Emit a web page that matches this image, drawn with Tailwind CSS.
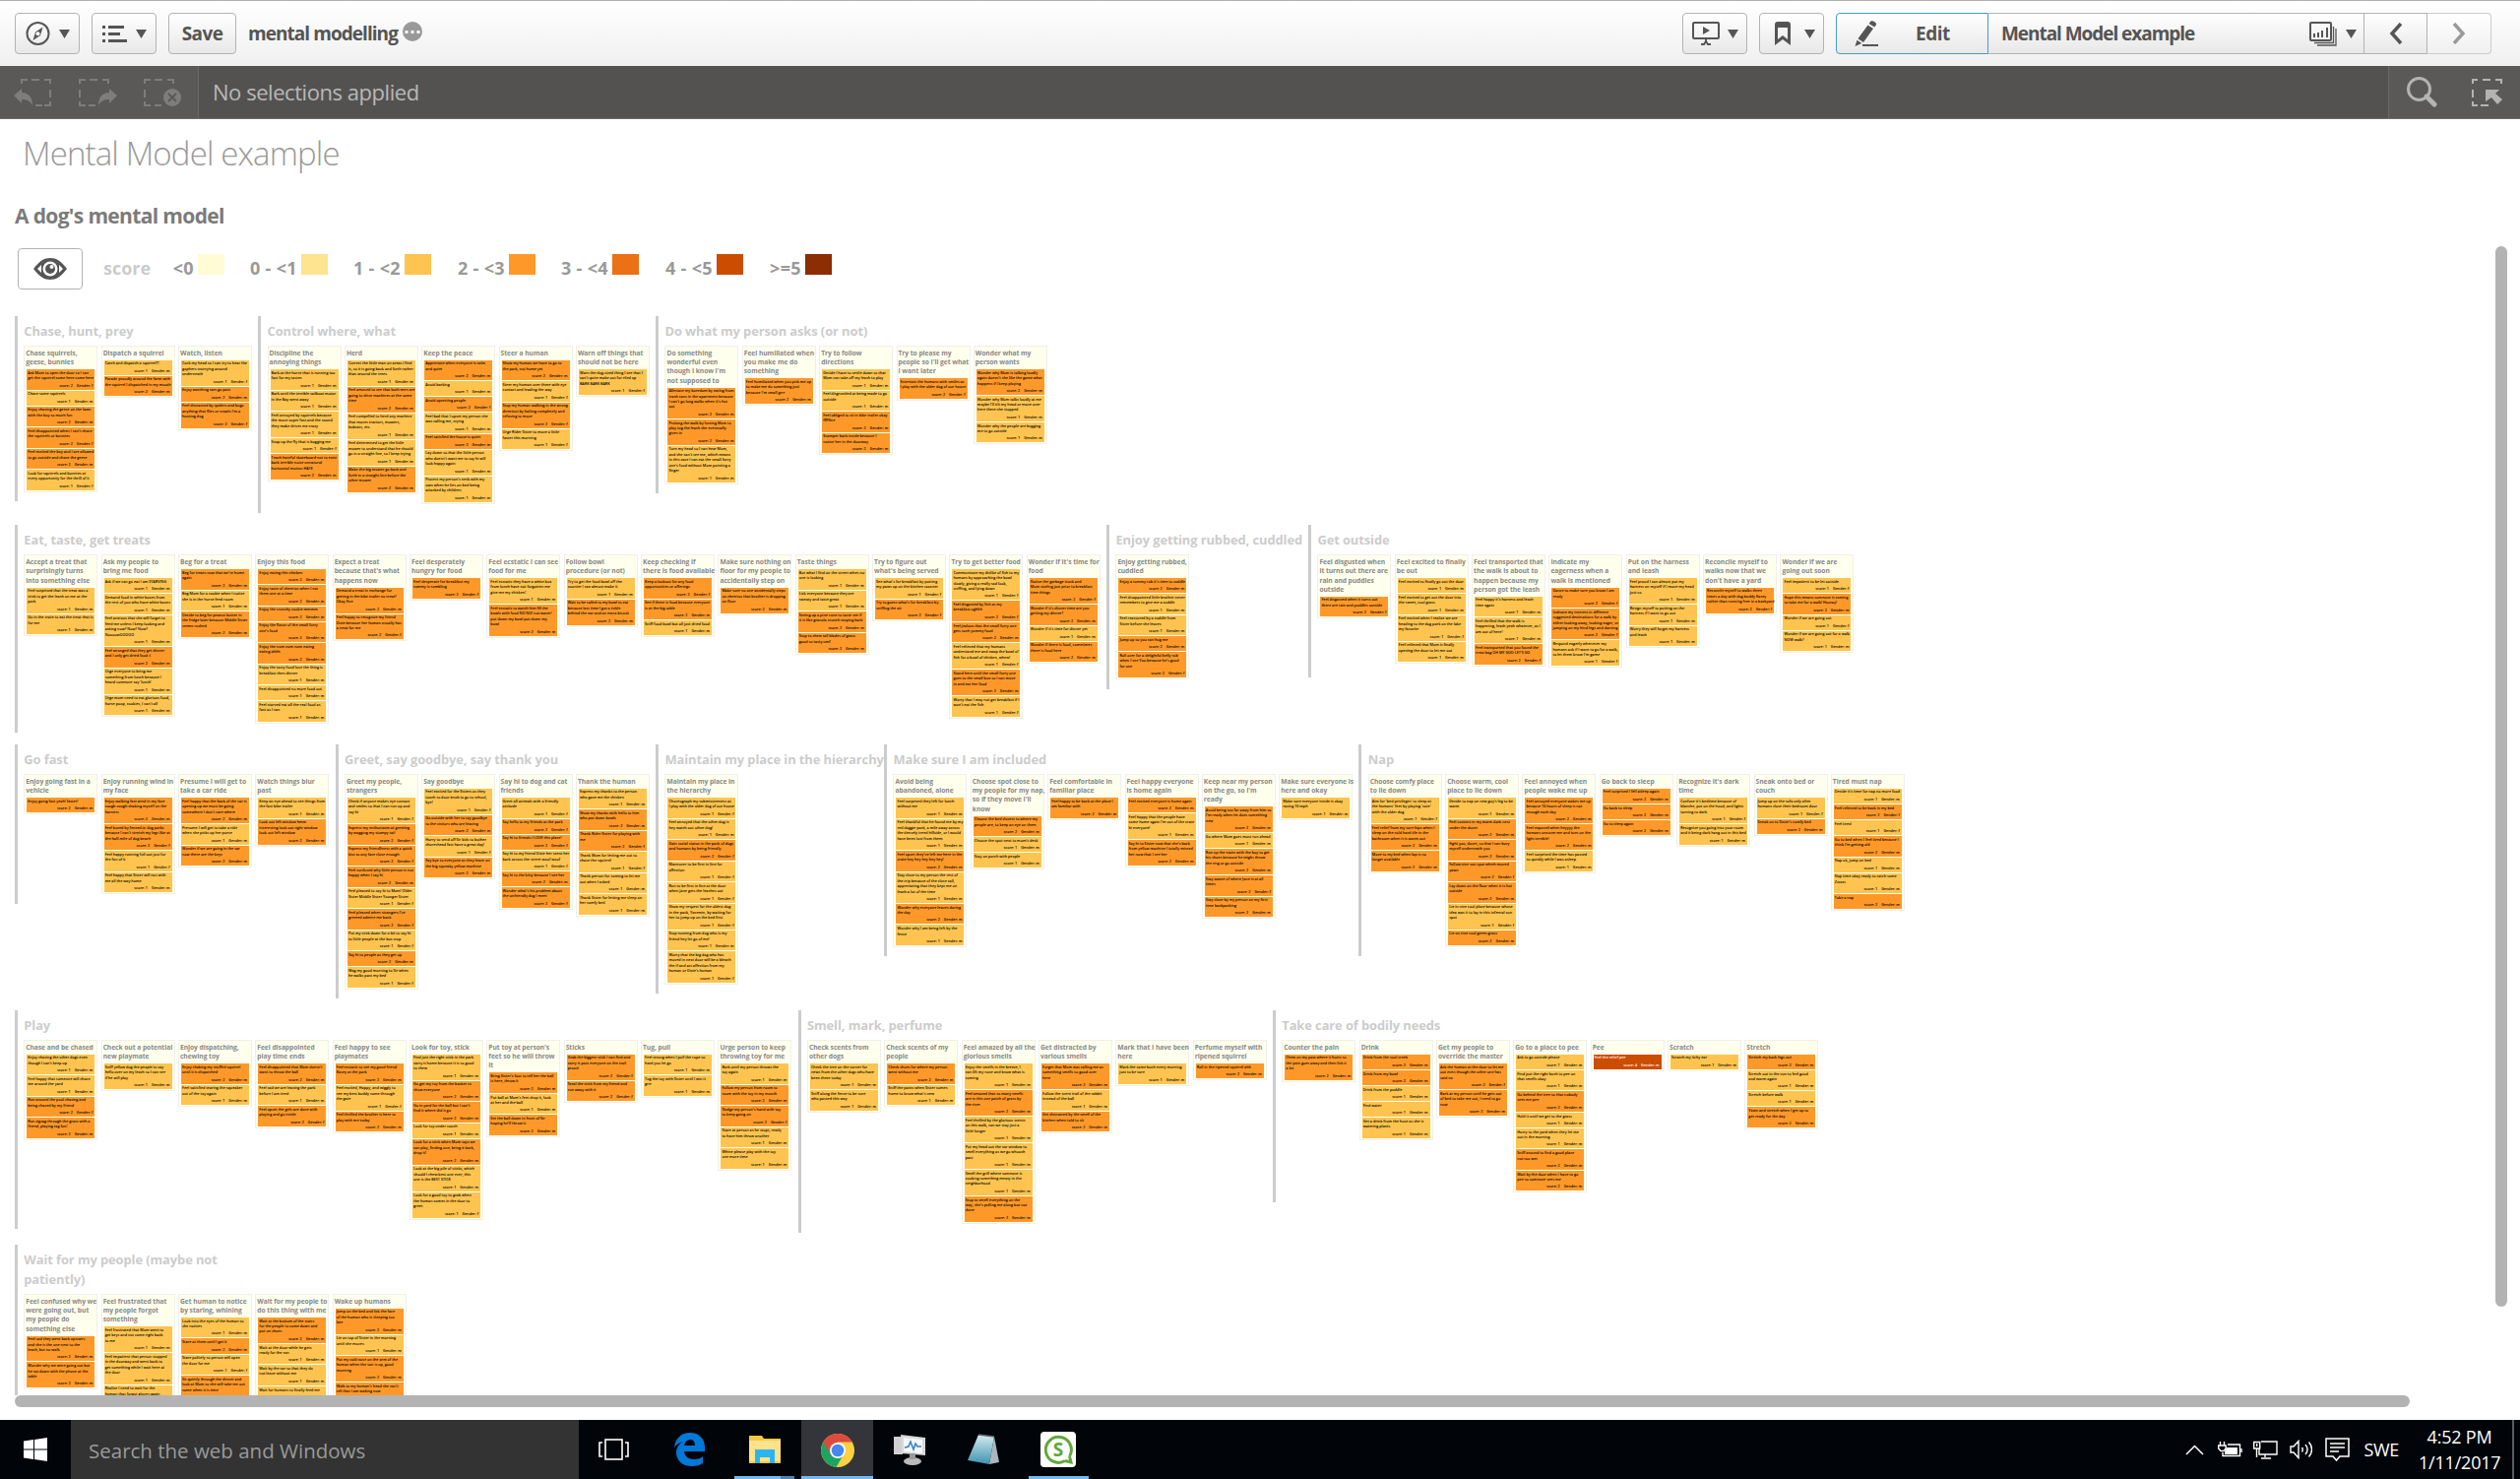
<!DOCTYPE html>
<html lang="en">
<head>
<meta charset="utf-8">
<title>Mental Model example</title>
<script src="https://cdn.jsdelivr.net/npm/@tailwindcss/browser@4"></script>
</head>
<body class="w-[2560px] h-[1502px] overflow-hidden bg-white font-['Open_Sans',sans-serif] flex flex-col">

<!-- Toolbar -->
<header class="h-[67px] shrink-0 border-t border-[#b0b0b0] bg-linear-to-b from-white to-[#f0f0f0] flex items-center pl-[15px] pr-[29px] text-[#555] font-bold text-[19px]">
  <button class="w-[66px] h-[42px] rounded-[4px] border border-[#b3b3b3] bg-linear-to-b from-white to-[#e8e8e8] flex items-center justify-center gap-[9px]">
    <svg width="25" height="24" viewBox="0 0 25 24" fill="none" stroke="#555" stroke-width="2"><circle cx="12.5" cy="12" r="11"/><path d="M17.5 5.5 15 14l-7.500 5L10 10.500z" fill="#555" stroke="none"/><circle cx="12.500" cy="12.300" r="2" fill="#fff" stroke="none"/></svg>
    <svg width="11" height="9" viewBox="0 0 11 9"><path d="M0 0h11L5.500 9z" fill="#555"/></svg>
  </button>
  <button class="ml-3 w-[66px] h-[42px] rounded-[4px] border border-[#b3b3b3] bg-linear-to-b from-white to-[#e8e8e8] flex items-center justify-center gap-[9px]">
    <svg width="25" height="17" viewBox="0 0 25 17" fill="#555"><path d="M0 0h3v3H0zM6 0h16v3H6zM0 7h3v3H0zM6 7h12v3H6zM0 14h3v3H0zM6 14h19v3H6z"/></svg>
    <svg width="11" height="9" viewBox="0 0 11 9"><path d="M0 0h11L5.500 9z" fill="#555"/></svg>
  </button>
  <button class="ml-3 w-[69px] h-[42px] rounded-[4px] border border-[#b3b3b3] bg-linear-to-b from-white to-[#e8e8e8] tracking-[-0.6px]">Save</button>
  <span class="ml-3 tracking-[-0.95px]">mental modelling</span>
  <svg class="ml-[5px] mb-1" width="20" height="20" viewBox="0 0 20 20"><circle cx="10" cy="10" r="10" fill="#999"/><path d="M2.500 9h3v3h-3zM8.500 9h3v3h-3zM14.500 9h3v3h-3z" fill="#fff"/></svg>

  <button class="ml-auto w-[66px] h-[42px] rounded-[4px] border border-[#b3b3b3] bg-linear-to-b from-white to-[#e8e8e8] flex items-center justify-center gap-[8px]">
    <svg width="28" height="24" viewBox="0 0 28 24" fill="none" stroke="#555" stroke-width="2"><rect x="1" y="1" width="26" height="16" rx="1"/><path d="M14 17v5M9 23h3l2-3 2 3h3"/><path d="M11 5v8l7-4z" fill="#555" stroke="none"/></svg>
    <svg width="11" height="9" viewBox="0 0 11 9"><path d="M0 0h11L5.500 9z" fill="#555"/></svg>
  </button>
  <button class="ml-3 w-[66px] h-[42px] rounded-[4px] border border-[#b3b3b3] bg-linear-to-b from-white to-[#e8e8e8] flex items-center justify-end pr-[8px] gap-[14px]">
    <svg width="16" height="24" viewBox="0 0 16 24"><path d="M3 0h10a3 3 0 0 1 3 3v21l-8-6-8 6V3a3 3 0 0 1 3-3zm0 6v12l5-4 5 4V6z" fill="#555" fill-rule="evenodd"/></svg>
    <svg width="11" height="9" viewBox="0 0 11 9"><path d="M0 0h11L5.500 9z" fill="#555"/></svg>
  </button>
  <button class="ml-3 w-[155px] h-[42px] rounded-l-[4px] border border-[#4a9bc9] bg-linear-to-b from-white to-[#e8e8e8] flex items-center pl-[17px] tracking-[-0.5px]">
    <svg width="26" height="26" viewBox="0 0 26 26" fill="#555"><path d="M14.500 4.500l5.500 3.500-10 14-5.500-3.800zM15.600 3l2-2.500c1.500-1 6 1.500 5.500 3.500L21.200 6.500zM3.500 19.700l4.800 3.200L1.500 26zM9 24h16v2H9z"/></svg>
    <span class="ml-[37px]">Edit</span>
  </button>
  <div class="w-[381px] h-[42px] border-y border-[#b3b3b3] bg-linear-to-b from-white to-[#e8e8e8] flex items-center pl-[13px] pr-[7px] tracking-[-1.05px]">
    <span>Mental Model example</span>
    <svg class="ml-auto" width="28" height="25" viewBox="0 0 28 25" fill="none" stroke="#555" stroke-width="2"><rect x="1" y="1" width="21" height="18" rx="1"/><path d="M24.500 5v16.500H5M27 7v17H8" stroke-width="1.300"/><path d="M5 16v-4M9 16v-5M13 16V9M18 16V6"/></svg>
    <svg class="ml-[9px]" width="11" height="9" viewBox="0 0 11 9"><path d="M0 0h11L5.500 9z" fill="#555"/></svg>
  </div>
  <button class="w-[65px] h-[42px] border border-[#b3b3b3] bg-linear-to-b from-white to-[#e8e8e8] flex items-center justify-center">
    <svg width="15" height="22" viewBox="0 0 15 22" fill="none" stroke="#555" stroke-width="3.500"><path d="M13 1 4 11l9 10"/></svg>
  </button>
  <button class="w-[65px] h-[42px] rounded-r-[4px] border border-l-0 border-[#ccc] bg-linear-to-b from-white to-[#f0f0f0] flex items-center justify-center">
    <svg width="15" height="22" viewBox="0 0 15 22" fill="none" stroke="#999" stroke-width="3.500"><path d="M2 1l9 10-9 10"/></svg>
  </button>
</header>

<!-- Selections bar -->
<div class="h-[54px] shrink-0 bg-[#545250] border-b border-[#737170] flex text-[22px] text-[#b8b8b8]">
  <div class="w-[202px] bg-[#5a5957] border-r border-[#6b6a68] flex items-center pl-[14px] gap-[27px]">
    <svg width="39" height="30" viewBox="0 0 39 30" fill="none" stroke="#7e7d7b" stroke-width="2"><path d="M8 6V2h6M18 2h8M31 2h6v4M37 12v8M37 24v4h-6M22 28h7"/><path d="M0 18l8-7v4c7 0 11 5 11 13-3-5-6-6-11-6v4z" fill="#7e7d7b" stroke="none"/></svg>
    <svg width="39" height="30" viewBox="0 0 39 30" fill="none" stroke="#7e7d7b" stroke-width="2"><path d="M1 6V2h6M11 2h8M24 2h6v4M1 12v8M1 24v4h6M10 28h7"/><path d="M39 18l-8-7v4c-7 0-11 5-11 13 3-5 6-6 11-6v4z" fill="#7e7d7b" stroke="none"/></svg>
    <svg width="39" height="30" viewBox="0 0 39 30" fill="none" stroke="#7e7d7b" stroke-width="2"><path d="M1 6V2h6M11 2h8M24 2h6v4M1 12v8M1 24v4h6M11 28h7"/><circle cx="29" cy="20" r="9" fill="#7e7d7b" stroke="none"/><path d="M25 16l8 8M33 16l-8 8" stroke="#5a5957"/></svg>
  </div>
  <span class="ml-[14px] self-center tracking-[-0.45px]">No selections applied</span>
  <div class="ml-auto w-[134px] bg-[#5a5957] border-l border-[#6b6a68] flex items-center pl-[18px] gap-[35px]">
    <svg width="31" height="31" viewBox="0 0 31 31" fill="none" stroke="#b3b3b3"><circle cx="12.500" cy="12.500" r="11" stroke-width="3"/><path d="M20 20l8 8" stroke-width="5" stroke-linecap="round"/></svg>
    <svg width="31" height="30" viewBox="0 0 31 30" fill="none" stroke="#b3b3b3" stroke-width="2"><path d="M1 6V2h5M11 2h8M24 2h6v4M1 12v8M1 24v4h5M9 28h8"/><path d="M14 12h14l-4 4 7 6-5 5-6-7-6 4z" fill="#b3b3b3" stroke="none"/></svg>
  </div>
</div>

<main class="relative h-[1321px] shrink-0 flex flex-col">
  <h1 class="h-[70px] pl-[23px] leading-[70px] text-[33px] font-light text-[#999] tracking-[-0.85px]">Mental Model example</h1>
  <h2 class="h-[56px] pl-[15px] leading-[56px] text-[21px] font-bold text-[#7b7b7b] tracking-[-0.65px]">A dog's mental model</h2>
  <div class="h-[74px] pl-[18px] pt-[5px] flex items-start">
    <div class="w-[66px] h-[42px] rounded-[4px] border border-[#b3b3b3] flex items-center justify-center">
      <svg width="34" height="22" viewBox="0 0 34 22"><path d="M0 11C6 3 11 0 17 0s11 3 17 11c-6 8-11 11-17 11S6 19 0 11z" fill="#555"/><circle cx="17" cy="11" r="7.500" fill="#fff"/><circle cx="17" cy="11" r="5" fill="#555"/><circle cx="18.500" cy="9" r="2" fill="#fff"/><path d="M4 11l4-4v8zM30 11l-4-4v8z" fill="#fff"/></svg>
    </div>
    <span class="ml-[21px] w-[69px] leading-[40px] text-[18px] font-bold text-[#ccc]">score</span>
    <div id="legend" class="flex pt-[6px] text-[18px] tracking-[0.350px] font-bold text-[#999]"></div>
  </div>
  <div id="board" class="ml-[15px] h-[1096px] w-[2500px] overflow-hidden flex flex-col gap-[12px]"></div>
  <div class="absolute left-[2535px] top-[129px] w-3 h-[1077px] rounded-full bg-[#b3b3b3]"></div>
  <div class="absolute left-[15px] top-[1296px] w-[2433px] h-3 rounded-full bg-[#b3b3b3]"></div>
</main>

<!-- Taskbar -->
<footer class="h-[60px] shrink-0 bg-[#010409] flex text-white">
  <div class="w-[72px] flex items-center justify-center"><svg width="24" height="24" viewBox="0 0 24 24" fill="#fff"><path d="M0 3.500l10-1.400v9.400H0zM11 2l13-2v11.500H11zM0 12.500h10v9.400L0 20.500zM11 12.500h13V24l-13-2z"/></svg></div>
  <div class="w-[516px] bg-[#333] pl-[18px] leading-[62px] text-[20.500px] text-[#9a9a9a]">Search the web and Windows</div>
  <div class="w-[72px] flex items-center justify-center"><svg width="32" height="22" viewBox="0 0 32 22" fill="none" stroke="#fff" stroke-width="1.600"><rect x="7" y="1" width="17" height="20"/><path d="M4 4H1v14h3M27 4h3v14h-3"/></svg></div>
  <div class="w-[79px] flex items-center justify-center"><svg width="32" height="34" viewBox="0 0 32 34"><path d="M1 15C2 6 8 0 17 0c9 0 15 6 15 15v4H11c1 6 5 8 10 8 4 0 7-1 9-3v7c-3 2-7 3-11 3C9 34 3 28 3 20c0-5 3-9 7-11-4 1-7 3-9 6zm10-2h11c0-4-2-6-5-6s-5 2-6 6z" fill="#0078d7"/></svg></div>
  <div class="w-[75px] flex flex-col items-center justify-end">
    <svg class="mb-[13px]" width="32" height="28" viewBox="0 0 32 28"><path d="M0 0h13l2 3h17v25H0z" fill="#f5c945"/><path d="M0 5h32v21H0z" fill="#ffe28a"/><path d="M6 14h20v14h-5v-6H11v6H6z" fill="#2cb4f0"/></svg>
    <div class="w-[61px] h-[3px] flex"><div class="w-[47px] bg-[#76b9ed]"></div><div class="w-[14px] bg-[#4f86b0]"></div></div>
  </div>
  <div class="w-[73px] bg-[#34353b] flex flex-col items-center justify-end">
    <svg class="mb-[9px]" width="34" height="34" viewBox="0 0 34 34"><circle cx="17" cy="17" r="17" fill="#fbd043"/><path d="M17 17 2.300 8.500A17 17 0 0 0 15.500 33.900L23 21z" fill="#1da462"/><path d="M2.300 8.500A17 17 0 0 1 31.700 8.500H17L10 21z" fill="#dd4b3e"/><circle cx="17" cy="17" r="8" fill="#fff"/><circle cx="17" cy="17" r="6.300" fill="#4688f1"/></svg>
    <div class="w-full h-[3px] bg-[#76b9ed]"></div>
  </div>
  <div class="w-[75px] flex items-center justify-center"><svg width="35" height="32" viewBox="0 0 35 32"><path d="M1 3h9v18H1z" fill="#d0d0d0"/><path d="M8 1l25 3v18L9 20z" fill="#d9d9d9"/><path d="M11 4l19 2v14l-19-2z" fill="#f2f8fd"/><path d="M12 14l4-1 2-5 3 8 2-6 2 3h4" fill="none" stroke="#3d80b8" stroke-width="1.500"/><ellipse cx="20" cy="28" rx="9" ry="4" fill="#bbb"/><path d="M17 20h6v6h-6z" fill="#999"/></svg></div>
  <div class="w-[74px] flex items-center justify-center"><svg width="34" height="32" viewBox="0 0 34 32"><defs><linearGradient id="pad" x1="0" y1="0" x2="0" y2="1"><stop offset="0" stop-color="#d4edf2"/><stop offset="1" stop-color="#3f92ad"/></linearGradient></defs><path d="M12 1l16 2-5 28L1 27z" fill="url(#pad)"/><path d="M28 3l5 26-10 2z" fill="#a9b6bd"/><path d="M12 1l16 2" stroke="#666" stroke-width="1.500"/></svg></div>
  <div class="w-[78px] flex flex-col items-center justify-end">
    <svg class="mb-[9px]" width="36" height="36" viewBox="0 0 36 36"><rect width="36" height="36" rx="4" fill="#fff"/><path d="M29.500 25a13 13 0 1 0-4.500 4.500M29.500 25l1.500 6-6-1.500" fill="none" stroke="#61a83a" stroke-width="3"/><text x="18" y="25" text-anchor="middle" font-size="19" font-weight="700" fill="#61a83a">S</text></svg>
    <div class="w-[61px] h-[3px] bg-[#76b9ed]"></div>
  </div>
  <div class="ml-auto flex items-center">
    <svg width="19" height="11" viewBox="0 0 19 11" fill="none" stroke="#fff" stroke-width="1.500"><path d="M1 10l8.500-8.500L18 10"/></svg>
    <svg class="ml-[14px]" width="25" height="18" viewBox="0 0 25 18" fill="none" stroke="#fff" stroke-width="1.400"><path d="M10 4h12.500v11.500H5V12M2.500 1v4M6.500 1v4M.7 5h7.500v3L6 10.500H3L.7 8z"/><path d="M9 7h11v7H7v-3z" fill="#fff" stroke="none"/><path d="M24 8v4"/></svg>
    <svg class="ml-[11px]" width="25" height="20" viewBox="0 0 25 20" fill="none" stroke="#fff" stroke-width="1.400"><path d="M8 2h16v13H6V9M.7 2.500h6V9h-6zM3.700 4v3M12 15v3M8 19h10M3.500 9v9"/></svg>
    <svg class="ml-[12px]" width="23" height="20" viewBox="0 0 23 20" fill="none" stroke="#fff" stroke-width="1.400"><path d="M1 7h3l5-5.500v17L4 13H1zM12.500 8c1 1.500 1 3 0 4.500M16 5c2.500 3 2.500 7 0 10M19.500 2.500c4 4.500 4 10.500 0 15"/></svg>
    <svg class="ml-[13px]" width="25" height="25" viewBox="0 0 25 25" fill="none" stroke="#fff" stroke-width="1.500"><path d="M1 1h23v18H15l-3.500 4L8 19H1zM5 6h15M5 10h15M5 14h9"/></svg>
    <span class="ml-[14px] text-[18px] tracking-[-0.300px]">SWE</span>
    <div class="ml-[20px] w-[83px] text-center text-[18px] leading-[26px] tracking-[-0.200px]">4:52 PM<br>1/11/2017</div>
    <div class="ml-[12px] mr-[6px] w-[2px] h-[60px] bg-[#5c5c5e]"></div>
  </div>
</footer>

<script>
// Row per "= ", tower group per "# title|minWidth", tower per "* heading", note per "<score><gender> text"; "/" breaks a line.
const DATA = `
=
# Chase, hunt, prey
* Chase squirrels,/geese, bunnies
2f Ask Mom to open the door so I can/get the squirrel come here come here
1m Chase some squirrels
2m Enjoy chasing the geese on the lawn/with the boy so much fun
2f Feel disappointed when I can't chase/the squirrels or bunnies
2m Feel excited the boy and I are allowed/to go outside and chase the geese
1f Look for squirrels and bunnies at/every opportunity for the thrill of it
* Dispatch a squirrel
1m Catch and dispatch a squirrel!!!
2m Parade proudly around the farm with/the squirrel I dispatched in my mouth
* Watch, listen
1f Cock my head so I can try to hear the/gophers scurrying around/underneath
2m Enjoy watching cars go past
2f Feel distracted by spiders and bugs/anything that flies or crawls I'm a/hunting dog
# Control where, what
* Discipline the/annoying things
1m Bark at the horse that is running too/fast for my tastes
1m Bark until the terrible sailboat motor/in the Bay went away
1m Feel annoyed by squirrels because/the move super fast and the sound/they make drives me crazy
1f Snap up the fly that is bugging me
2m Teach hateful skateboard not to exist/bark terrible noise unnatural/horizontal motion HATE
* Herd
1m Correct the little man on areas I find/is, so it is going back and forth rather/than around the trees
2m Feel amused to see that both men are/going to drive machines at the same/time
1m Feel compelled to herd any machine/that moves tractors, mowers,/bobcats, etc.
1m Feel determined to get the little/mower to understand that he should/go in a straight line, so I keep trying
2m Make the big mower go back and/forth in a straight line before the/other mower
* Keep the peace
2m Appreciate when everyone is calm/and quiet
1m Avoid barking
2f Avoid upsetting people
1m Feel bad that I upset my person she/was calling me, crying
2m Feel satisfied the house is quiet
1m Lay down so that the little person/who doesn't want me to say hi will/look happy again
1m Protect my person's neck with my/own when he lies on bed being/attacked by children
* Steer a human
2m Show my human we have to go to/the park, not home yet
1f Steer my human over there with eye/contact and leading the way
2f Stop my human walking in the wrong/direction by halting completely and/refusing to move
1f Urge Rider Sister to move a little/faster this morning
* Warn off things that/should not be here
1f Warn the dog-sized thing I see that I/can't quite make out for riled up/BARK BARK BARK
# Do what my person asks (or not)
* Do something/wonderful even/though I know I'm/not supposed to
2m Alleviate my boredom by eating from/trash cans in the apartment because/I can't go long walks when it's hot/out
2m Prolong the walk by forcing Mom to/play tug the leash she eventually/gives in
1m Turn my head so I can hear Mom,/and she can't see me, which means/in this case I can eat the small furry/one's food without Mom pointing a/finger
* Feel humiliated when/you make me do/something
2m Feel humiliated when you pick me up/to make me do something just/because I'm small grrr
* Try to follow/directions
1m Decide I have to settle down so that/Mom can take off my leash to play
1m Feel disgruntled at being made to go/outside
2m Feel obliged to sit in bike trailer okay/fffffine
2m Scamper back inside because I/notice her in the doorway
* Try to please my/people so I'll get what/I want later
2f Entertain the humans with smiles as/I play with the older dog of our house
* Wonder what my/person wants
2m Wonder why Mom is talking loudly/again doesn't she like the game what/happens if I keep playing
1m Wonder why Mom talks loudly at me/maybe I'll tilt my head or move over/here there she stopped
1m Wonder why the people are bugging/me to go outside
=
# Eat, taste, get treats
* Accept a treat that/surprisingly turns/into something else
1m Feel surprised that the treat was a/trick to get the leash on me at the/park
1m Go in the crate to eat the treat that is/for me
* Ask my people to/bring me food
1m Ask if we can go eat I am STARVING
1m Demand food in white boxes from/the rest of you who have white boxes
1m Feel anxious that she will forget to/feed me unless I keep looking and/asking now? Now? Now?/NoooowOOOOO
2m Feel wronged that they get dinner/and I only get dried food :(
1m Urge everyone to bring me/something from lunch because I/heard someone say 'lunch'
1m Urge mom need to eat glorious food,/horse poop, cookies, I can't all
* Beg for a treat
2m Beg for treats now that we're home/again
1m Beg Mom for a cookie when I notice/she is in the horse feed room
2m Decide to beg for peanut butter in/the fridge later because Middle Sister/seems rushed
* Enjoy this food
2m Enjoy eating this chicken
2m Enjoy taste of cheerios when I eat/them one at a time
2m Enjoy the crunchy cookie mmmm
2m Enjoy the flavor of the small furry/one's food
2m Enjoy the nom nom nom eating/eating ahhh
1m Enjoy the tasty food love the thing is/breakfast then dinner
1m Feel disappointed no more food out
1m Feel starved eat all the real food as/fast as I can
* Expect a treat/because that's what/happens now
2m Demand a treat in exchange for/getting in the bike trailer no treat?/Okay fine
2f Feel happy to recognize my friend/Dixie because her human usually has/a treat for me
* Feel desperately/hungry for food
2f Feel desperate for breakfast my/tummy is rumbling
* Feel ecstatic I can see/food for me
1m Feel ecstatic they have a white box/from lunch have not forgotten me/give me my chicken!
2m Feel ecstatic to watch him fill the/bowls with food NO NO! not water!/put down my bowl put down my/bowl
* Follow bowl/procedure (or not)
1m Try to get the food bowl off the/counter I can almost make it
2m Wait to be called to my bowl to eat/because last time I got a tickle/behind the ear and an extra biscuit
* Keep checking if/there is food available
2f Keep a lookout for any food/opportunities or offerings
2m See if there is food because everyone/is at the big table
1m Sniff food bowl but all just dried food
* Make sure nothing on/floor for my people to/accidentally step on
2m Make sure no one accidentally steps/on cheerios that brother is dropping/on floor
* Taste things
1m But what I find on the street when no/one is looking
1m Lick everyone because they are/sweaty and taste great
2m Seeing up a pine cone to taste see if/it is like granola crunch rasping bark
2m Stop to chew tall blades of grass/good so tasty umf
* Try to figure out/what's being served
1f See what's for breakfast by putting/my paws up on the kitchen counter
2f Try to guess what's for breakfast by/sniffing the air
* Try to get better food
1f Communicate my dislike of fish to my/humans by approaching the bowl/slowly, giving a really sad look,/sniffing, and lying down
2f Feel disgusted by fish as my/breakfast ughhh
2m Feel jealous that the small furry one/gets such yummy food
1f Feel relieved that my humans/understand me and swap the bowl of/fish for a bowl of chicken, whew!
2m Stand here until the small furry one/goes to the small box so I can move/in and eat her food
1f Worry that I may not get breakfast if I/won't eat the fish
* Wonder if it's time for/food
2f Notice the garbage truck and/Mom sizzling just prior to breakfast/time things
2m Wonder if it's dinner time are you/getting my dinner?
1m Wonder if it's time for dinner yet
2m Wonder if there is food, sometimes/there is food here
# Enjoy getting rubbed, cuddled|205
* Enjoy getting rubbed,/cuddled
2m Enjoy a tummy rub it's time to cuddle
1m Feel disappointed little brother never/remembers to give me a cuddle
1m Feel reassured by a cuddle from/Sister before she leaves
2m Jump up so you can hug me
2f Roll over for a delightful belly rub/when I see You because he's good/for one
# Get outside
* Feel disgusted when/it turns out there are/rain and puddles/outside
2f Feel disgusted when it turns out/there are rain and puddles outside
* Feel excited to finally/be out
1m Feel excited to finally go out the door
1m Feel excited to get out the door into/the sweet, cool grass
1f Feel excited when I realize we are/heading to the dog park on the lake/my favorite
1m Feel relieved that Mom is finally/opening the door to let me out
* Feel transported that/the walk is about to/happen because my/person got the leash
1m Feel happy it's harness and leash/time again
1m Feel thrilled that the walk is/happening, leash yeah whatever, as I/am out of here!
2f Feel transported that you found the/treat bag OH MY GOD LET'S GO
* Indicate my/eagerness when a/walk is mentioned
2f Dance to make sure you know I am/ready
2f Indicate my interest in different/suggested destinations for a walk by/either looking away, looking eager, or/jumping on my hind legs and dancing
1f Respond eagerly whenever my/humans ask if I want to go for a walk,/to let them know I'm game
* Put on the harness/and leash
1m Feel proud I can almost put my/harness on myself if I move my head/just so
1m Resign myself to putting on the/harness if I want to go out
1m Worry they will forget my harness/and leash
* Reconcile myself to/walks now that we/don't have a yard
2f Reconcile myself to walks three/times a day with dog buddy Kasey/rather than running free in a backyard
* Wonder if we are/going out soon
1f Feel impatient to be let outside
2m Hope this means someone is coming/to take me for a walk! Hooray!
1f Wonder if we are going out
1m Wonder if we are going out for a walk/NOW walk?
=
# Go fast
* Enjoy going fast in a/vehicle
2m Enjoy going fast yeah! faster!
* Enjoy running wind in/my face
2m Enjoy walking fast wind in my face/cough cough shaking myself on the/harness
2f Feel bored by fenced-in dog parks/because I can't stretch my legs like at/the half-mile of dog beach
1f Feel happy running full out just for/the fun of it
1m Feel happy that Sister will run with/me all the way home
* Presume I will get to/take a car ride
2m Feel happy that the back of the car is/opening up we must be going/somewhere I don't care where
1m Presume I will get to take a ride/when she picks up her purse
2m Wonder if we are going in the car/now there are the keys
* Watch things blur/past
1m Keep an eye ahead to see things from/the fast bike trailer
2m Look out left window hmm/interesting look out right window/look out left window
# Greet, say goodbye, say thank you
* Greet my people,/strangers
1f Check if anyone makes eye contact/and smiles so that I can run up and/say hi
2f Express my enthusiasm at greeting/by wagging my stumpy tail
2f Express my friendliness with a quick/kiss to any face close enough
2m Feel confused why little person is not/happy when I say hi
1f Feel pleased to say hi to Mom! Older/Sister Middle Sister Younger Sister
2f Feel pleased when strangers I've/greeted admire me back
1f Put my stick down for a bit to say hi/to little people at the bus stop
2m Say hi to people as they get up
1f Wag my good morning to Sir when/he walks past my bed
* Say goodbye
1f Feel excited for the Sisters as they/touch to door knob to go to school,/bye!
2m Go outside with her to say goodbye/to the visitors who are leaving
1f Hurry to send off Sir kids to bother/shoreshead fast have a great day!
2m Say bye to everyone as they leave on/the big squeaky yellow machine
* Say hi to dog and cat/friends
1f Greet all animals with a friendly/attitude
2f Say hello to my friends at the park
2f Say hi to friends I LOVE this place!
1f Say hi to my friend Dixie her scent her/bark across the street woof woof
2m Say hi to the kitty because I see her
2f Wonder what's his problem about/the unfriendly dog I meet
* Thank the human
1m Express my thanks to the person/who gave me the chicken
2m Show my thanks with hello to him/who put down bowls
2f Thank Rider Sister for playing with/me
1f Thank Mom for letting me out to/chase the squirrel
1m Thank person for coming to let me/out when I asked
1m Thank Sister for letting me sleep on/her comfy bed
# Maintain my place in the hierarchy|232
* Maintain my place in/the hierarchy
1f Choreograph my submissiveness as/I play with the older dog of our house
1m Feel annoyed that the other dog is/hey watch out other dog!
2f Gain social status in the pack of dogs/and humans by being friendly
1f Maneuver to be first in line for/affection
1f Run to be first in line at the door/when Jane gets the leashes out
1f Show my respect for the oldest dog/in the pack, Yasemin, by waiting for/her to jump up on the bed first
1m Stop running from dog who is my/friend hey let go of me!
1f Worry that the big dog who has/moved in next door will be a bleach/the if and act affection from my/human or Dixie's human
# Make sure I am included
* Avoid being/abandoned, alone
1m Feel surprised they left for lunch/without me
1m Feel thankful that he found me by my/red doggie pack, a mile away across/the densely treed hillside, or I would/have been lost from them
2m Feel upset they've left me here in the/crate hey hey hey hey hey!
1m Stay close to my person the rest of/the trip because of the close call,/appreciating that they kept me on/leash a lot of the time
2m Wonder why everyone leaves during/the day
1m Wonder why I am being left by the/fence
* Choose spot close to/my people for my nap,/so if they move I'll/know
2m Choose the bed closest to where my/people are, to keep an eye on them
1m Choose the spot next to mom's desk
1m Stay on porch with people
* Feel comfortable in/familiar place
2m Feel happy to be back at the place I/am familiar with
* Feel happy everyone/is home again
2m Feel excited everyone is home again
1m Feel happy that the people have/come home again I'm out of the crate/hi everyone!
2m Say hi to Sister now that she's back/from yellow machine I totally missed/her now that I see her
* Keep near my person/on the go, so I'm/ready
2m Avoid being too far away from him so/I'm ready when he does something/new
1m Go where Mom goes must run ahead
2m Run up the stairs with the boy to get/his shoes because he might throw/the ring or go outside
2f Stay aware of where Jane is at all/times
2m Stay close by my person on my first/time backpacking
* Make sure everyone is/here and okay
1m Make sure everyone inside is okay/racing 10 mph
# Nap
* Choose comfy place/to lie down
1f Aim for 'bed privileges' to sleep at/the humans' feet by playing 'cute'/with the older dog
2m Feel relief from my sore hips when I/sleep on the cold hard tile in the/bathroom when it is warm out
2m Move to my bed when lap is no/longer available
* Choose warm, cool/place to lie down
1m Decide to nap on new guy's leg to be/warm
2m Feel content in my warm dark nest/under the duvet
2m Fight you, duvet, so that I can bury/myself underneath you
2f Follow nice sun spot which moved/yawn
2m Lay down on the floor when it is hot/outside
1f Lie in nice cool place because whose/idea was it to lay in this infernal sun/spot
2m Lie on nice cool green grass
* Feel annoyed when/people wake me up
2m Feel annoyed everyone wakes me up/because 16 hours of sleep is not/enough each day
2m Feel exposed when heyyyy the/humans uncover me and turn on the/light terrible!
1m Feel surprised the time has passed/so quickly while I was asleep
* Go back to sleep
2m Feel surprised I fell asleep again
2m Go back to sleep
2m Go to sleep again
* Recognize it's dark/time
1f Confuse it's bedtime because of/blanche, pot on the hood, and lights/turning to dark
1m Recognize you going into your room/and it being dark hang out in this bed
* Sneak onto bed or/couch
1f Jump up on the sofa only after/humans close their bedroom door
2m Sneak on to Sister's comfy bed
* Tired must nap
1m Decide it's time for nap no more food
2f Feel relieved to be back in my bed
1f Feel tired
2m Go to bed when I feel tired because I/think I'm getting old
1m Nap ok, jump on bed
1m Nap time okay ready to catch some/Zzzzzs
2m Take a nap
=
# Play
* Chase and be chased
1m Enjoy chasing the other dogs even/though I can't keep up
1m Feel happy that someone will chase/me around the yard
2f Run around the pool chasing and/being chased by my friend
2m Run zigzag through the grass with a/friend, playing tag fun!
* Check out a potential/new playmate
1m Sniff yellow dog the people to say/hello over on my leash so I can see/if he will play
* Enjoy dispatching,/chewing toy
2m Enjoy shaking my stuffed squirrel/until it is dispatched
1m Feel satisfied tearing the squeaker/out of the toy again
* Feel disappointed/play time ends
2m Feel disappointed that Mom doesn't/want to throw the ball
1m Feel sad we are leaving the park/before I am tired
2f Feel upset the girls are done with/playing and go inside
* Feel happy to see/playmates
2m Feel ecstatic to see my good friend/Kasey at the park
1f Feel excited, Happy, and wiggly to/see my best buddy come through/the gate
2m Feel thrilled the brother is here to/play with me today
* Look for toy, stick
1m Find just the right stick in the park/carry it home because it is so good/to chew
2m Go get my toy from the basket to/show everyone
2m Go in yard for the ball but I can't/find it where did it go
1m Look for toy under couch
2m Look for a stick when Mom says we/can play, finding one, bring it back,/drop it!
1m Look at the big pile of sticks, which/should I chew best one ever, this/one is the BEST STICK
1f Look for a good toy to grab when/the human comes in the door to/greet
* Put toy at person's/feet so he will throw/it
2m Bring Sister's foot to tell her the ball/is here, throw it
1m Put ball at Mom's feet drop it, look/at her and the ball
2m Set the ball down in front of Sir/hoping he'll throw it
* Sticks
2f Grab the biggest stick I can find and/carry it past everyone on the trail/proud
2f Steal the stick from my friend and/run away with it
* Tug, pull
1m Feel strong when I pull the rope so/hard you let go
1m Tug the toy with Sister until I win it/grrr
* Urge person to keep/throwing toy for me
1m Bark until my person throws the/toy again
2m Follow my person from room to/room with the toy in my mouth
2f Nudge my person's hand with toy/to keep going on
1m Stare at person as he stops, ready/to have him throw another
1m Whine please play with the toy/one more time
# Smell, mark, perfume
* Check scents from/other dogs
1m Check the tree on the corner for/news from the other dogs who have/been there today
1m Sniff along the fence to be sure/who passed this way
* Check scents of my/people
2m Check shoes for where my person/went without me
1m Sniff the pants when Sister comes/home to know what's new
* Feel amazed by all the/glorious smells
1m Enjoy the smells in the breeze, I/can lift my nose and know what is/coming
2m Feel amazed that so many smells/are in this one patch of grass by/the river
1m Feel thrilled by the glorious scents/on this walk, can we stay just a/little longer
1m Put my head out the car window to/smell everything as we go whoosh/past
1m Smell the grill where someone is/cooking something meaty in the/neighborhood
2m Stop to smell everything on the/way, she's pulling me along but not/done
* Get distracted by/various smells
2m Forget that Mom was calling me as/something smells so good over/here
1m Follow the scent trail of the rabbit/instead of the ball
2m Get distracted by the smell of the/kitchen when told to sit
* Mark that I have been/here
1m Mark the same bush every morning/just to be sure
* Perfume myself with/ripened squirrel
2m Roll in the ripened squirrel ahh
# Take care of bodily needs
* Counter the pain
2m Chew on my paw where it hurts so/the pain goes away and then lick it/a lot
* Drink
2m Drink from the cool creek
2m Drink from my bowl
1m Drink from the puddle
1m Find water
1m Get a drink from the hose as she is/watering plants
* Get my people to/override the master
2f Ask the human at the door to let me/out even though the other one has/said no
2m Bark at my person until he gets out/of bed to take me out, I need to go/now
* Go to a place to pee
1m Ask to go outside please
1m Find just the right bush to pee on/that smells okay
2m Go behind the tree so that nobody/sees me pee
1m Hold it until we get to the grass
1m Hurry to the yard when they let me/out in the morning
2m Sniff around to find a good place/not too wet
2m Wait by the door when I have to go/pee so someone sees me
* Pee
4m Feel the relief pee
* Scratch
1m Scratch my itchy ear
* Stretch
2m Stretch my back legs out
1m Stretch out in the sun to feel good/and warm again
1m Stretch before walk
2m Yawn and stretch when I get up to/get ready for the day
=
# Wait for my people (maybe not/patiently)
* Feel confused why we/were going out, but/my people do/something else
2m Feel sad they went back upstairs/and she is the one next to the/leash, but no walk
2m Wonder why we were going out but/he sat down with the phone at the/table
* Feel frustrated that/my people forgot/something
1m Feel frustrated that Mom went to/get keys and not come right back/to me
1m Feel impatient that person stopped/in the doorway and went back to/get something while I wait here at/the door
1m Realize I need to wait for the/human that forgot gloves again
* Get human to notice/by staring, whining
1m Look into the eyes of the human so/she notices
2m Stare at them until I get it
1f Stare politely so person will open/the door for me
2m Sit quietly through the dinner and/look at Mom so she will take me out/some when it is time
* Wait for my people to/do this thing with me
2m Wait at the bottom of the stairs/for the people to come down and/put on shoes
1m Wait at the door while he gets/ready for the run
1m Wait by the car so that they do/not leave without me
1f Wait for humans to finally feed me
* Wake up humans
2m Jump on the bed and lick the face/of the human who is sleeping too/late
1m Lie on top of Sister in the morning/until she moves
2m Put my cold nose on the arm of the/human when the sun is up, good/morning
2m Walk to my human's head she can't/tell that I am waking now
`;

const SCORE_BG = {1: "bg-[#fec44f] text-black", 2: "bg-[#fe9929] text-black", 4: "bg-[#cc4c02] text-white"};
const board = document.getElementById("board");
const el = (cls, html) => { const d = document.createElement("div"); d.className = cls; if (html) d.innerHTML = html; return d; };
const br = s => s.replaceAll("/", "<br>");
let row, group, cols, col;
for (const line of DATA.trim().split("\n")) {
  const c = line[0], rest = line.slice(2);
  if (c === "=") { row = el("flex items-start shrink-0"); board.append(row); }
  else if (c === "#") {
    const [title, w] = rest.split("|");
    group = el("shrink-0 border-l-[3px] border-[#ccc] pl-[6.300px] pt-[6px] pb-[9.500px]");
    group.append(el("mb-[4.500px] text-[12.900px] leading-[19.600px] tracking-[-0.080px] font-bold text-[#ccc] whitespace-nowrap", br(title)));
    cols = el("flex items-start gap-[3.350px]"); group.append(cols); row.append(group);
    group.dataset.w = w || "";
  }
  else if (c === "*") {
    col = el("w-[75px] shrink-0 border border-[#f0f0ea] bg-[#ffffee] pl-[2px] pr-[2px] pt-[1.700px]");
    col.append(el("-ml-px pb-[2.700px] text-[6.700px] leading-[9.270px] tracking-[-0.050px] font-bold text-[#888] whitespace-nowrap", br(rest)));
    cols.append(col);
    group.style.width = (group.dataset.w || 12.2 + 78.35 * cols.children.length) + "px";
  }
  else {
    const n = el(SCORE_BG[c] + " mb-px pt-[0.600px] pl-px pr-[2px] text-[3.700px] leading-[5.450px] font-semibold whitespace-nowrap", br(line.slice(3)));
    n.append(el("h-[9px] leading-[9px] text-[3.700px] flex justify-end gap-[4px]", "<span>score: " + c + "</span><span>Gender: " + line[1] + "</span>"));
    col.append(n);
  }
}

const legend = document.getElementById("legend");
for (const [label, bg, w] of [["&lt;0", "bg-[#fffbd5]", "w-[54px]"], ["0 - &lt;1", "bg-[#fee391]", "w-[105px]"], ["1 - &lt;2", "bg-[#fec44f]", "w-[105px]"], ["2 - &lt;3", "bg-[#fe9929]", "w-[106px]"], ["3 - &lt;4", "bg-[#ec7014]", "w-[105px]"], ["4 - &lt;5", "bg-[#cc4c02]", "w-[106px]"], ["&gt;=5", "bg-[#8c2d04]", "w-[90px]"]]) {
  const d = el(w + " flex justify-end gap-[4px] whitespace-nowrap");
  d.append(el("leading-[29px]", label), el("w-[27px] h-[21px] " + bg));
  legend.append(d);
}
</script>
</body>
</html>
